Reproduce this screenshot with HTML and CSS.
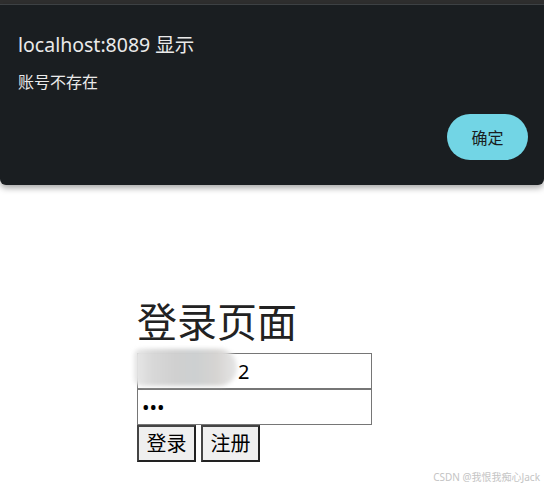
FILE: index.html
```html
<!DOCTYPE html>
<html>
<head>
    <title>登录页面</title>
    <link rel="stylesheet" href="styles.css">
</head>
<body>
    <div class="login">
        <h1>登录页面</h1>
        <form class="login-form">
            <div class="field">
                <input type="text" class="input username" value="2">
                <div class="mosaic"></div>
            </div>
            <input type="password" class="input" value="123">
            <div class="actions">
                <button type="button" class="button">登录</button>
                <button type="button" class="button">注册</button>
            </div>
        </form>
    </div>

    <!-- alert dialog shown over the page -->
    <div class="dialog">
        <div class="dialog-body">
            <h2 class="dialog-title">localhost:8089 显示</h2>
            <p class="dialog-message">账号不存在</p>
            <div class="dialog-footer">
                <button type="button" class="dialog-button">确定</button>
            </div>
        </div>
    </div>

    <div class="watermark">CSDN @我恨我痴心Jack</div>
</body>
</html>
```

FILE: styles.css
```css
body {
    margin: 0;
    background-color: white;
    font-family: "Noto Sans", "Noto Sans CJK SC", sans-serif;
    height: 491px;
    position: relative;
    overflow: hidden;
}

.login {
    padding: 298px 0 0 137px;
}

.login h1 {
    margin: 0 0 7px 0;
    font-size: 40px;
    font-weight: normal;
    line-height: 48px;
    color: #222;
}

.login-form {
    width: 235px;
}

.field {
    position: relative;
}

.input {
    display: block;
    box-sizing: border-box;
    width: 235px;
    height: 36px;
    margin: 0;
    padding: 0 4px;
    border: 1px solid #767676;
    font-family: "Noto Sans", "Noto Sans CJK SC", sans-serif;
    font-size: 20px;
    color: #000;
    background: white;
}

.username {
    padding-left: 100px;
}

.mosaic {
    position: absolute;
    left: -3px;
    top: -4px;
    width: 103px;
    height: 37px;
    border-radius: 6px 18px 18px 8px;
    background:
        linear-gradient(90deg, #e8e8e8 0, #d8d8d8 18%, #d0d0d0 40%, #cdd0d1 60%, #d6d4d2 80%, #e6e6e6 100%);
    filter: blur(2px);
}

.actions {
    display: flex;
    gap: 5px;
}

.button {
    width: 59px;
    height: 37px;
    padding: 0;
    border: 2px solid;
    border-color: #444 #222 #222 #444;
    background-color: #efefef;
    font-family: "Noto Sans", "Noto Sans CJK SC", sans-serif;
    font-size: 20px;
    color: #000;
    line-height: 1;
}

.dialog {
    position: absolute;
    top: 0;
    left: 0;
    right: 0;
    height: 4px;
    background-color: #2f2f2f;
}

.dialog-body {
    position: absolute;
    top: 4px;
    left: 0;
    width: 544px;
    height: 181px;
    box-sizing: border-box;
    padding: 25px 16px 0 18px;
    background-color: #1a1e21;
    border-top: 1px solid #3d4144;
    border-radius: 0 0 6px 6px;
    box-shadow: 0 3px 6px rgba(0, 0, 0, 0.35);
}

.dialog-title {
    margin: 0;
    font-size: 19.5px;
    font-weight: normal;
    line-height: 30px;
    color: #eaeaea;
}

.dialog-message {
    margin: 12px 0 0 0;
    font-size: 16px;
    line-height: 20px;
    color: #eaeaea;
}

.dialog-footer {
    display: flex;
    justify-content: flex-end;
    margin-top: 22px;
}

.dialog-button {
    width: 81px;
    height: 46px;
    border: none;
    border-radius: 23px;
    background-color: #72d5e5;
    color: #1a1e21;
    font-family: "Noto Sans", "Noto Sans CJK SC", sans-serif;
    font-size: 16px;
}

.watermark {
    position: absolute;
    right: 4px;
    bottom: 7px;
    font-size: 10px;
    color: #c4c4c4;
}
```
